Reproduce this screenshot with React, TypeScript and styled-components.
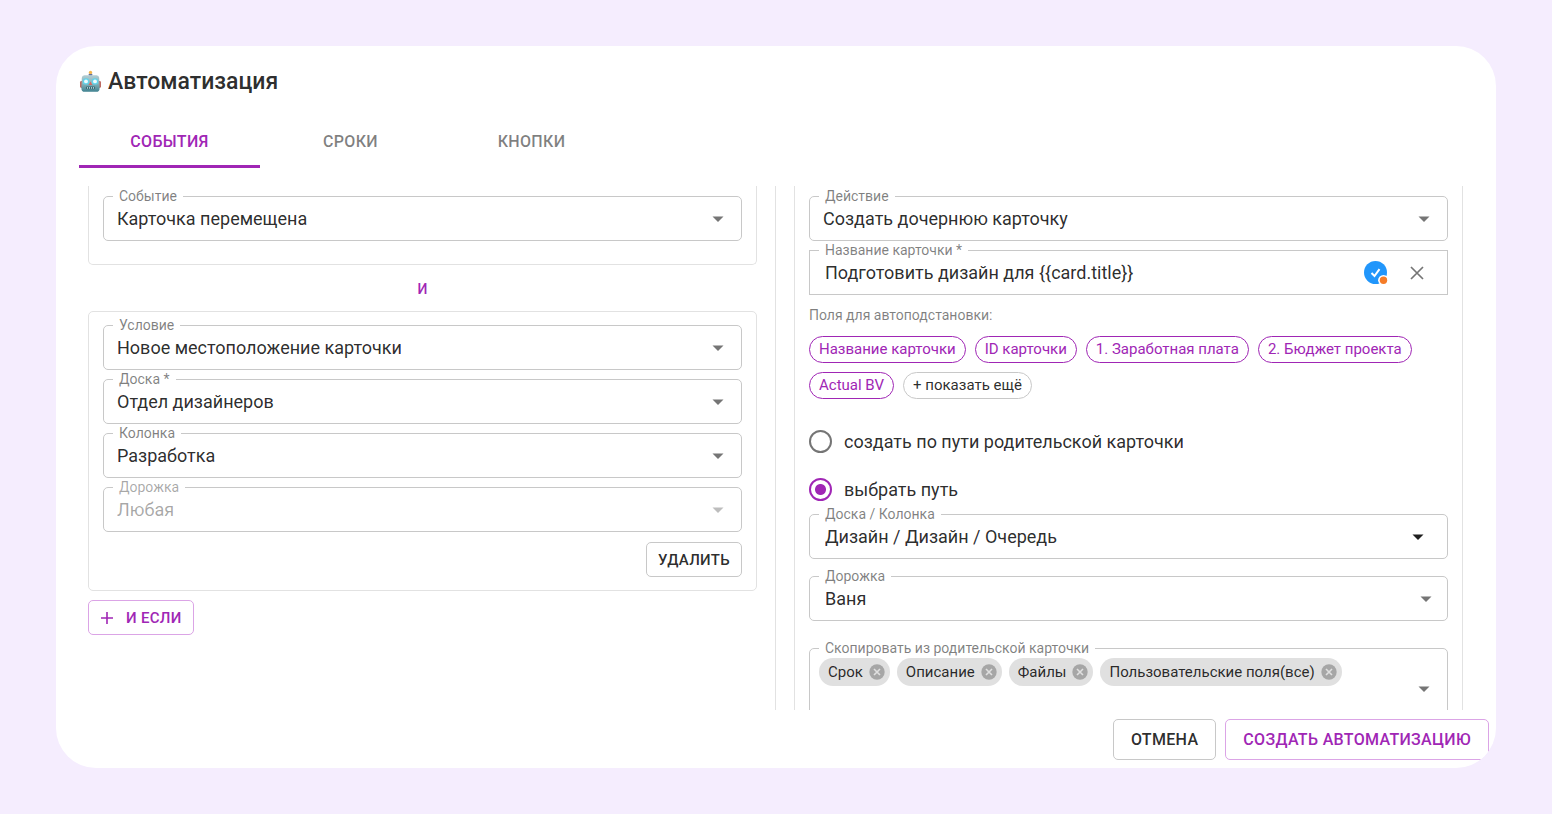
import React, { useId, useState } from 'react';
import styled, { createGlobalStyle, css } from 'styled-components';

const purple = '#a026b5';
const textColor = 'rgba(0, 0, 0, 0.84)';
const muted = 'rgba(0, 0, 0, 0.5)';
const disabledColor = 'rgba(0, 0, 0, 0.35)';
const outline = '#c8c8c8';
const panelLine = '#e2e2e2';

const GlobalStyle = createGlobalStyle`
  *, *::before, *::after { box-sizing: border-box; }
  body {
    margin: 0;
    background: #f5edfe;
    color: ${textColor};
    font-family: Roboto, "Liberation Sans", sans-serif;
    font-size: 18px;
  }
  button, input, select { font: inherit; color: inherit; margin: 0; }
`;

const Page = styled.div`
  display: flex;
  height: 100vh;
  min-height: 400px;
  padding: 46px 56px;
`;

const Dialog = styled.main`
  flex: 1;
  min-width: 0;
  display: flex;
  flex-direction: column;
  background: #fff;
  border-radius: 40px;
  overflow: hidden;
`;

const Header = styled.header`
  display: flex;
  align-items: center;
  gap: 6px;
  padding: 20px 23px 0;
`;

const Title = styled.h1`
  margin: 0;
  font-size: 23px;
  line-height: 32px;
  font-weight: 500;
`;

const Tabs = styled.div`
  display: flex;
  padding: 16px 23px 0;
`;

const Tab = styled.button<{ $active: boolean }>`
  width: 181px;
  height: 54px;
  padding: 3px 0 0;
  border: 0;
  border-bottom: 3px solid ${(p) => (p.$active ? purple : 'transparent')};
  background: none;
  color: ${(p) => (p.$active ? purple : muted)};
  font-size: 16px;
  font-weight: 500;
  letter-spacing: 0.02em;
  text-transform: uppercase;
  cursor: pointer;
`;

const Body = styled.div`
  flex: 1;
  min-height: 0;
  display: grid;
  grid-template-columns: minmax(0, 1fr) 1px minmax(0, 1fr);
  column-gap: 18px;
  margin: 18px 33px 0 32px;
  overflow-y: auto;
  scrollbar-width: none;
`;

const Divider = styled.div`
  background: ${panelLine};
`;

const Column = styled.section`
  min-width: 0;
`;

const Panel = styled.div<{ $open?: boolean; $bottom?: number }>`
  display: flex;
  flex-direction: column;
  gap: 1px;
  padding: ${(p) => (p.$open ? 2 : 5)}px 14px ${(p) => p.$bottom ?? 13}px;
  border: 1px solid ${panelLine};
  border-radius: 5px;
  ${(p) =>
    p.$open &&
    css`
      border-top: 0;
      border-top-left-radius: 0;
      border-top-right-radius: 0;
    `}
`;

const Joiner = styled.p`
  margin: 0;
  padding: 14px 0 11px;
  line-height: 21px;
  font-size: 14px;
  font-weight: 500;
  text-align: center;
  color: ${purple};
`;

const Outline = styled.fieldset<{ $square?: boolean }>`
  min-width: 0;
  margin: 0;
  padding: 0 0 6px;
  border: 1px solid ${outline};
  border-radius: ${(p) => (p.$square ? 0 : 5)}px;
`;

const Legend = styled.legend<{ $disabled?: boolean }>`
  margin-left: 9px;
  padding: 0 6px;
  font-size: 14px;
  line-height: 16px;
  color: ${(p) => (p.$disabled ? disabledColor : muted)};
`;

const Control = styled.div`
  display: grid;
  align-items: center;

  > * { grid-area: 1 / 1; }
`;

const Select = styled.select<{ $wide?: boolean }>`
  appearance: none;
  width: 100%;
  height: 30px;
  padding: 0 48px 2px ${(p) => (p.$wide ? 15 : 13)}px;
  border: 0;
  outline: 0;
  background: none;
  color: ${textColor};

  &:disabled { color: ${disabledColor}; opacity: 1; }
`;

const Arrow = styled.svg<{ $inset: number; $tone?: string }>`
  justify-self: end;
  width: 12px;
  height: 6px;
  margin-right: ${(p) => p.$inset}px;
  fill: ${(p) => p.$tone ?? '#757575'};
  pointer-events: none;
`;

const InputRow = styled.div`
  display: flex;
  align-items: center;
  height: 30px;
  padding: 0 23px 0 15px;
`;

const TextInput = styled.input`
  flex: 1;
  min-width: 0;
  padding: 0 0 2px;
  border: 0;
  outline: 0;
  background: none;
`;

const IconButton = styled.button`
  display: flex;
  align-items: center;
  justify-content: center;
  padding: 0;
  border: 0;
  background: none;
  cursor: pointer;
`;

const InputActions = styled.div`
  display: flex;
  align-items: center;
  gap: 22px;
`;

const Actions = styled.div`
  display: flex;
  justify-content: flex-end;
  padding-top: 9px;
`;

const Button = styled.button<{ $primary?: boolean; $large?: boolean }>`
  display: inline-flex;
  align-items: center;
  gap: 12px;
  height: ${(p) => (p.$large ? 41 : 35)}px;
  padding: 0 ${(p) => (p.$large ? 17 : 11)}px;
  border: 1px solid ${(p) => (p.$primary ? '#dba4e6' : outline)};
  border-radius: 5px;
  background: #fff;
  color: ${(p) => (p.$primary ? purple : textColor)};
  font-size: ${(p) => (p.$large ? 16 : 15)}px;
  font-weight: 500;
  letter-spacing: 0.02em;
  text-transform: uppercase;
  white-space: nowrap;
  cursor: pointer;
`;

const AddRow = styled.div`
  padding-top: 9px;
`;

const Hint = styled.p`
  margin: 0;
  padding: 9px 0 10px;
  font-size: 14px;
  line-height: 20px;
  color: ${muted};
`;

const Chips = styled.div`
  display: flex;
  flex-wrap: wrap;
  gap: 9px;
`;

const Chip = styled.button<{ $neutral?: boolean }>`
  height: 27px;
  padding: 0 9px 1px;
  border: 1px solid ${(p) => (p.$neutral ? outline : purple)};
  border-radius: 14px;
  background: #fff;
  color: ${(p) => (p.$neutral ? textColor : purple)};
  font-size: 15px;
  cursor: pointer;
`;

const Radios = styled.div`
  display: flex;
  flex-direction: column;
  gap: 16px;
  padding-top: 25px;
`;

const RadioLabel = styled.label`
  display: flex;
  align-items: center;
  gap: 12px;
  height: 32px;
`;

const Radio = styled.input`
  appearance: none;
  width: 23px;
  height: 23px;
  border: 2px solid #757575;
  border-radius: 50%;

  &:checked {
    border-color: ${purple};
    background: radial-gradient(circle, ${purple} 5px, transparent 6px);
  }
`;

const Spacer = styled.div<{ $size: number }>`
  height: ${(p) => p.$size}px;
`;

const TagBox = styled.div`
  display: grid;
  grid-template-columns: 1fr auto;
  align-items: center;
  height: 66px;
  padding-left: 9px;
`;

const Tags = styled.div`
  align-self: start;
  display: flex;
  flex-wrap: wrap;
  gap: 7px;
  padding-top: 2px;
`;

const Tag = styled.span`
  display: inline-flex;
  align-items: center;
  gap: 6px;
  height: 28px;
  padding: 0 5px 0 9px;
  border-radius: 14px;
  background: #e0e0e0;
  font-size: 15px;
`;

const Footer = styled.footer`
  display: flex;
  justify-content: flex-end;
  gap: 9px;
  padding: 9px 7px 8px;
`;

function RobotIcon() {
  return (
    <svg width="23" height="24" viewBox="0 0 23 24" aria-hidden="true">
      <defs>
        <linearGradient id="robot-face" x1="0" y1="0" x2="0" y2="1">
          <stop offset="0" stopColor="#b4cdd2" />
          <stop offset="0.5" stopColor="#86b3bb" />
          <stop offset="1" stopColor="#3f8290" />
        </linearGradient>
      </defs>
      <rect x="1" y="11" width="3" height="7" rx="1.4" fill="#bd6a63" />
      <rect x="19" y="11" width="3" height="7" rx="1.4" fill="#bd6a63" />
      <rect x="9.6" y="3.4" width="3.8" height="2.4" rx="1" fill="#64709a" />
      <circle cx="11.5" cy="2.4" r="1.7" fill="#f4b54a" />
      <path
        d="M5.4 5.2h12.200q2.400 0 2.600 2.600l.4 10.600q0 3.400-3.400 3.400H5.800q-3.400 0-3.400-3.400l.4-10.600q.2-2.600 2.600-2.600z"
        fill="url(#robot-face)"
      />
      <circle cx="7" cy="11.400" r="3.200" fill="#62d3ea" />
      <circle cx="16" cy="11.400" r="3.200" fill="#62d3ea" />
      <circle cx="7" cy="11.400" r="1.900" fill="#eefcff" />
      <circle cx="16" cy="11.400" r="1.900" fill="#eefcff" />
      <path d="M11.500 11.600l1.700 3.400H9.800z" fill="#d9655c" />
      <rect x="7" y="16.600" width="9" height="2.600" rx="0.800" fill="#3a6a75" />
      <path d="M8.500 17v1.800M10.500 17v1.800M12.500 17v1.800M14.500 17v1.800" stroke="#b7d3d8" strokeWidth="0.900" />
    </svg>
  );
}

function AssistIcon() {
  return (
    <svg width="24" height="24" viewBox="0 0 24 24" aria-hidden="true">
      <circle cx="11.500" cy="11.500" r="11.500" fill="#2196fb" />
      <path d="M7.500 12l3 3 5-6.800" fill="none" stroke="#fff" strokeWidth="2" />
      <circle cx="19.500" cy="19.300" r="5.400" fill="#fff" />
      <circle cx="19.500" cy="19.300" r="3.700" fill="#f57c28" />
    </svg>
  );
}

function CloseIcon() {
  return (
    <svg width="14" height="14" viewBox="0 0 14 14" fill="none" stroke="#757575" strokeWidth="1.700" aria-hidden="true">
      <path d="M1 1l12 12M13 1L1 13" />
    </svg>
  );
}

function TagCloseIcon() {
  return (
    <svg width="16" height="16" viewBox="0 0 16 16" aria-hidden="true">
      <circle cx="8" cy="8" r="7.700" fill="#a6a6a6" />
      <path d="M5 5l6 6M11 5l-6 6" stroke="#e0e0e0" strokeWidth="1.600" />
    </svg>
  );
}

function PlusIcon() {
  return (
    <svg width="14" height="14" viewBox="0 0 14 14" stroke={purple} strokeWidth="1.600" aria-hidden="true">
      <path d="M7 1v12M1 7h12" />
    </svg>
  );
}

function DropArrow({ inset, tone }: { inset: number; tone?: string }) {
  return (
    <Arrow $inset={inset} $tone={tone} viewBox="0 0 12 6" aria-hidden="true">
      <path d="M0.500 0.500h11L6 6z" />
    </Arrow>
  );
}

type SelectFieldProps = {
  label: string;
  value: string;
  disabled?: boolean;
  wide?: boolean;
  inset?: number;
  tone?: string;
};

function SelectField({ label, value, disabled, wide, inset = 17, tone }: SelectFieldProps) {
  const id = useId();
  return (
    <Outline>
      <Legend $disabled={disabled}>
        <label htmlFor={id}>{label}</label>
      </Legend>
      <Control>
        <Select id={id} $wide={wide} disabled={disabled} defaultValue={value}>
          <option>{value}</option>
        </Select>
        <DropArrow inset={inset} tone={disabled ? '#bdbdbd' : tone} />
      </Control>
    </Outline>
  );
}

const tabs = ['События', 'Сроки', 'Кнопки'];
const placeholders = ['Название карточки', 'ID карточки', '1. Заработная плата', '2. Бюджет проекта', 'Actual BV'];
const copied = ['Срок', 'Описание', 'Файлы', 'Пользовательские поля(все)'];

export default function App() {
  const [tab, setTab] = useState(0);
  const [path, setPath] = useState('choose');
  const [name, setName] = useState('Подготовить дизайн для {{card.title}}');

  return (
    <>
      <GlobalStyle />
      <Page>
        <Dialog>
          <Header>
            <RobotIcon />
            <Title>Автоматизация</Title>
          </Header>
          <Tabs role="tablist">
            {tabs.map((t, i) => (
              <Tab key={t} role="tab" aria-selected={tab === i} $active={tab === i} onClick={() => setTab(i)}>
                {t}
              </Tab>
            ))}
          </Tabs>
          <Body>
            <Column>
              <Panel $open $bottom={23}>
                <SelectField label="Событие" value="Карточка перемещена" />
              </Panel>
              <Joiner>И</Joiner>
              <Panel>
                <SelectField label="Условие" value="Новое местоположение карточки" />
                <SelectField label="Доска *" value="Отдел дизайнеров" />
                <SelectField label="Колонка" value="Разработка" />
                <SelectField label="Дорожка" value="Любая" disabled />
                <Actions>
                  <Button>Удалить</Button>
                </Actions>
              </Panel>
              <AddRow>
                <Button $primary>
                  <PlusIcon />
                  И если
                </Button>
              </AddRow>
            </Column>
            <Divider />
            <Column>
              <Panel $open>
                <SelectField label="Действие" value="Создать дочернюю карточку" />
                <Outline $square>
                  <Legend>
                    <label htmlFor="card-name">Название карточки *</label>
                  </Legend>
                  <InputRow>
                    <TextInput id="card-name" value={name} onChange={(e) => setName(e.target.value)} />
                    <InputActions>
                      <IconButton aria-label="Проверить">
                        <AssistIcon />
                      </IconButton>
                      <IconButton aria-label="Очистить" onClick={() => setName('')}>
                        <CloseIcon />
                      </IconButton>
                    </InputActions>
                  </InputRow>
                </Outline>
                <Hint>Поля для автоподстановки:</Hint>
                <Chips>
                  {placeholders.map((p) => (
                    <Chip key={p}>{p}</Chip>
                  ))}
                  <Chip $neutral>+ показать ещё</Chip>
                </Chips>
                <Radios>
                  <RadioLabel>
                    <Radio type="radio" name="path" checked={path === 'parent'} onChange={() => setPath('parent')} />
                    создать по пути родительской карточки
                  </RadioLabel>
                  <RadioLabel>
                    <Radio type="radio" name="path" checked={path === 'choose'} onChange={() => setPath('choose')} />
                    выбрать путь
                  </RadioLabel>
                </Radios>
                <SelectField label="Доска / Колонка" value="Дизайн / Дизайн / Очередь" wide inset={23} tone="#1f1f1f" />
                <Spacer $size={7} />
                <SelectField label="Дорожка" value="Ваня" wide inset={15} />
                <Spacer $size={17} />
                <Outline>
                  <Legend>Скопировать из родительской карточки</Legend>
                  <TagBox>
                    <Tags>
                      {copied.map((c) => (
                        <Tag key={c}>
                          {c}
                          <IconButton aria-label={`Убрать: ${c}`}>
                            <TagCloseIcon />
                          </IconButton>
                        </Tag>
                      ))}
                    </Tags>
                    <DropArrow inset={17} />
                  </TagBox>
                </Outline>
              </Panel>
            </Column>
          </Body>
          <Footer>
            <Button $large>Отмена</Button>
            <Button $large $primary>
              Создать автоматизацию
            </Button>
          </Footer>
        </Dialog>
      </Page>
    </>
  );
}
